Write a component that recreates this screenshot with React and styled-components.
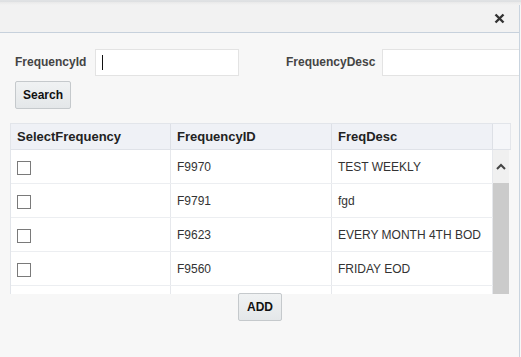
import React from "react";
import styled, { createGlobalStyle } from "styled-components";

const GlobalStyle = createGlobalStyle`
  html, body {
    margin: 0;
    padding: 0;
    background: #f7f7f7;
    font-family: "Liberation Sans", Arial, sans-serif;
  }
`;

const Page = styled.div`
  width: 521px;
  height: 357px;
  overflow: hidden;
  background: #f7f7f7;
  display: flex;
  flex-direction: column;
`;

const BackStrip = styled.div`
  height: 5px;
  background: linear-gradient(to bottom, #ececec 0, #d4d8dc 1px, #e9e9e9 2px, #f2f2f2 5px);
`;

const Dialog = styled.div`
  flex: 1;
  display: flex;
  flex-direction: column;
  border-right: 1px solid #c9d4df;
  margin-right: 1px;
  overflow: hidden;
`;

const TitleBar = styled.div`
  height: 27px;
  background: #f2f2f2;
  border-bottom: 1px solid #c7d1dc;
  display: flex;
  align-items: center;
  justify-content: flex-end;
  padding-right: 14px;
`;

const CloseButton = styled.button`
  border: none;
  background: none;
  padding: 0;
  width: 11px;
  height: 11px;
  cursor: pointer;
  display: flex;
`;

const Body = styled.div`
  flex: 1;
  display: flex;
  flex-direction: column;
  padding: 15px 10px 0 10px;
`;

const FilterRow = styled.div`
  display: flex;
  align-items: center;
  padding-left: 5px;
  height: 28px;
`;

const Label = styled.label`
  font-size: 12px;
  font-weight: bold;
  color: #444;
  width: ${(p) => p.$w}px;
  flex-shrink: 0;
`;

const Input = styled.div`
  width: ${(p) => p.$w}px;
  height: 27px;
  background: #fff;
  border: 1px solid #e3e3e3;
  margin-right: ${(p) => p.$mr || 0}px;
  display: flex;
  align-items: center;
  padding-left: 6px;
  box-sizing: border-box;
  flex-shrink: 0;
`;

const Caret = styled.span`
  width: 1px;
  height: 15px;
  background: #111;
`;

const Button = styled.button`
  font-family: "Liberation Sans", Arial, sans-serif;
  font-size: 12px;
  font-weight: bold;
  color: #111;
  background: linear-gradient(to bottom, #f0f2f3, #e4e7e9);
  border: 1px solid #c5c9cc;
  border-radius: 2px;
  height: 28px;
  padding: 0 ${(p) => p.$px}px;
  cursor: pointer;
`;

const SearchWrap = styled.div`
  padding: 5px 0 0 5px;
`;

const TableBox = styled.div`
  margin-top: 14px;
  width: 500px;
  height: 170px;
  border-top: 1px solid #e2e5ea;
  border-left: 1px solid #e2e5ea;
  display: flex;
  flex-direction: column;
  overflow: hidden;
  background: #fff;
`;

const HeadRow = styled.div`
  display: grid;
  grid-template-columns: 160px 161px 161px 18px;
  height: 25px;
  background: #eff1f6;
  border-bottom: 1px solid #dfe2e8;
  flex-shrink: 0;
`;

const HeadCell = styled.div`
  font-size: 13px;
  font-weight: bold;
  color: #222;
  display: flex;
  align-items: center;
  padding-left: 6px;
  border-right: 1px solid #dde0e6;
`;

const ScrollHead = styled.div`
  background: #f5f6f9;
  border-right: 1px solid #e4e6ea;
`;

const BodyArea = styled.div`
  flex: 1;
  display: flex;
  overflow: hidden;
`;

const Rows = styled.div`
  width: 482px;
  display: flex;
  flex-direction: column;
`;

const Row = styled.div`
  display: grid;
  grid-template-columns: 160px 161px 161px;
  height: 33px;
  border-bottom: 1px solid #eceef1;
  flex-shrink: 0;
`;

const Cell = styled.div`
  font-size: 12px;
  color: #333;
  display: flex;
  align-items: center;
  padding-left: 6px;
  border-right: 1px solid #e6e8ec;
`;

const Check = styled.span`
  width: 12px;
  height: 12px;
  border: 1px solid #7a7a7a;
  background: #fff;
  margin-top: 2px;
`;

const ScrollTrack = styled.div`
  width: 16px;
  display: flex;
  flex-direction: column;
  background: #f0f0f0;
  border-right: 2px solid #f7f7f7;
`;

const ScrollArrow = styled.div`
  height: 33px;
  display: flex;
  align-items: center;
  justify-content: center;
`;

const ScrollThumb = styled.div`
  flex: 1;
  background: #cbcbcb;
`;

const Footer = styled.div`
  display: flex;
  justify-content: center;
  padding-left: 1px;
  margin-top: -1px;
`;

const rows = [
  { id: "F9970", desc: "TEST WEEKLY" },
  { id: "F9791", desc: "fgd" },
  { id: "F9623", desc: "EVERY MONTH 4TH BOD" },
  { id: "F9560", desc: "FRIDAY EOD" },
  { id: "", desc: "" },
];

export default function App() {
  return (
    <>
      <GlobalStyle />
      <Page>
        <BackStrip />
        <Dialog>
          <TitleBar>
            <CloseButton aria-label="close">
              <svg width="11" height="11" viewBox="0 0 11 11">
                <path d="M1.5 1.5 L9.5 9.5 M9.5 1.5 L1.5 9.5" stroke="#333" strokeWidth="2.4" />
              </svg>
            </CloseButton>
          </TitleBar>
          <Body>
            <FilterRow>
              <Label $w={80}>FrequencyId</Label>
              <Input $w={144} $mr={47}>
                <Caret />
              </Input>
              <Label $w={96}>FrequencyDesc</Label>
              <Input $w={140} />
            </FilterRow>
            <SearchWrap>
              <Button $px={7}>Search</Button>
            </SearchWrap>
            <TableBox>
              <HeadRow>
                <HeadCell>SelectFrequency</HeadCell>
                <HeadCell>FrequencyID</HeadCell>
                <HeadCell>FreqDesc</HeadCell>
                <ScrollHead />
              </HeadRow>
              <BodyArea>
                <Rows>
                  {rows.map((r, i) => (
                    <Row key={i}>
                      <Cell>{r.id && <Check />}</Cell>
                      <Cell>{r.id}</Cell>
                      <Cell>{r.desc}</Cell>
                    </Row>
                  ))}
                </Rows>
                <ScrollTrack>
                  <ScrollArrow>
                    <svg width="10" height="7" viewBox="0 0 10 7">
                      <path d="M1 6 L5 2 L9 6" fill="none" stroke="#444" strokeWidth="2" />
                    </svg>
                  </ScrollArrow>
                  <ScrollThumb />
                </ScrollTrack>
              </BodyArea>
            </TableBox>
            <Footer>
              <Button $px={8}>ADD</Button>
            </Footer>
          </Body>
        </Dialog>
      </Page>
    </>
  );
}
